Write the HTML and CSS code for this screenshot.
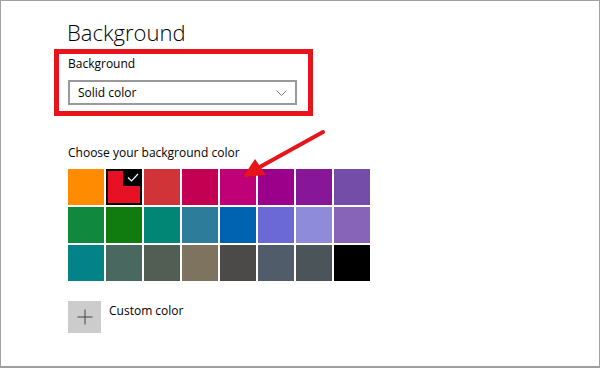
FILE: index.html
```html
<!DOCTYPE html>
<html>
<head>
<meta charset="utf-8">
<link rel="stylesheet" href="styles.css">
</head>
<body>
<div class="window">
  <h1 class="title">Background</h1>
  <div class="highlight">
    <div class="label">Background</div>
    <div class="dropdown">
      <span class="dropdown-text">Solid color</span>
      <svg class="chevron" width="11" height="6" viewBox="0 0 11 6"><path d="M0.5 0.5 L5.5 5.5 L10.5 0.5" fill="none" stroke="#7a7a7a" stroke-width="1"/></svg>
    </div>
  </div>
  <div class="section-label">Choose your background color</div>
  <div class="swatches">
    <div class="swatch" style="background:#FF8C00"></div>
    <div class="swatch selected" style="background:#E81123"><span class="check"><svg width="12" height="9" viewBox="0 0 12 9"><path d="M1 4.5 L4.5 8 L11 1" fill="none" stroke="#fff" stroke-width="1.2"/></svg></span></div>
    <div class="swatch" style="background:#D13438"></div>
    <div class="swatch" style="background:#C30052"></div>
    <div class="swatch" style="background:#BF0077"></div>
    <div class="swatch" style="background:#9A0089"></div>
    <div class="swatch" style="background:#881798"></div>
    <div class="swatch" style="background:#744DA9"></div>
    <div class="swatch" style="background:#10893E"></div>
    <div class="swatch" style="background:#107C10"></div>
    <div class="swatch" style="background:#018574"></div>
    <div class="swatch" style="background:#2D7D9A"></div>
    <div class="swatch" style="background:#0063B1"></div>
    <div class="swatch" style="background:#6B69D6"></div>
    <div class="swatch" style="background:#8E8CD8"></div>
    <div class="swatch" style="background:#8764B8"></div>
    <div class="swatch" style="background:#038387"></div>
    <div class="swatch" style="background:#486860"></div>
    <div class="swatch" style="background:#525E54"></div>
    <div class="swatch" style="background:#7E735F"></div>
    <div class="swatch" style="background:#4C4A48"></div>
    <div class="swatch" style="background:#515C6B"></div>
    <div class="swatch" style="background:#4A5459"></div>
    <div class="swatch" style="background:#000000"></div>
  </div>
  <div class="custom">
    <div class="custom-btn"><svg width="16" height="16" viewBox="0 0 16 16"><path d="M8 0.5 V15.5 M0.5 8 H15.5" stroke="#444" stroke-width="1"/></svg></div>
    <span class="custom-text">Custom color</span>
  </div>
  <svg class="arrow" width="600" height="368" viewBox="0 0 600 368">
    <line x1="323" y1="132" x2="258" y2="168" stroke="#E8141B" stroke-width="4" stroke-linecap="round"/>
    <polygon points="243,177 255,159 266,175" fill="#E8141B"/>
  </svg>
</div>
</body>
</html>
```

FILE: styles.css
```css
html, body {
  margin: 0;
  padding: 0;
  background: #fff;
}
.window {
  position: relative;
  box-sizing: border-box;
  width: 600px;
  height: 368px;
  border: 1px solid #a0a0a0;
  border-bottom-width: 2px;
  padding: 17px 0 0 66px;
  font-family: "Open Sans", "Noto Sans", sans-serif;
  color: #000;
  overflow: hidden;
}
.title {
  margin: 0;
  font-size: 22px;
  line-height: 28px;
  font-weight: 300;
}
.highlight {
  box-sizing: border-box;
  width: 259px;
  height: 67px;
  margin: 3px 0 0 -13px;
  border: 5px solid #E8141B;
  padding: 2px 11px 0 9px;
}
.label {
  font-size: 12px;
  line-height: 16px;
}
.dropdown {
  box-sizing: border-box;
  height: 25px;
  margin-top: 8px;
  border: 2px solid #999;
  display: flex;
  align-items: center;
  justify-content: space-between;
  padding: 0 8px 0 8px;
}
.dropdown-text {
  font-size: 12px;
  line-height: 21px;
}
.chevron {
  display: block;
}
.section-label {
  margin-top: 28px;
  margin-left: 1px;
  font-size: 12px;
  line-height: 18px;
}
.swatches {
  margin-top: 7px;
  margin-left: 1px;
  display: grid;
  grid-template-columns: repeat(8, 36px);
  grid-auto-rows: 36px;
  column-gap: 2px;
  row-gap: 2px;
}
.swatch {
  position: relative;
}
.swatch.selected {
  box-shadow: inset 0 0 0 2px #000;
}
.check {
  position: absolute;
  top: 0;
  right: 0;
  width: 19px;
  height: 17px;
  background: #000;
  display: flex;
  align-items: center;
  justify-content: center;
}
.check svg {
  display: block;
}
.custom {
  margin-top: 20px;
  margin-left: 1px;
  display: flex;
  align-items: flex-start;
  gap: 8px;
}
.custom-btn {
  width: 33px;
  height: 32px;
  background: #cccccc;
  display: flex;
  align-items: center;
  justify-content: center;
}
.custom-btn svg {
  display: block;
}
.custom-text {
  font-size: 12px;
  line-height: 18px;
  margin-top: 1px;
}
.arrow {
  position: absolute;
  left: -1px;
  top: -1px;
  pointer-events: none;
}
```
